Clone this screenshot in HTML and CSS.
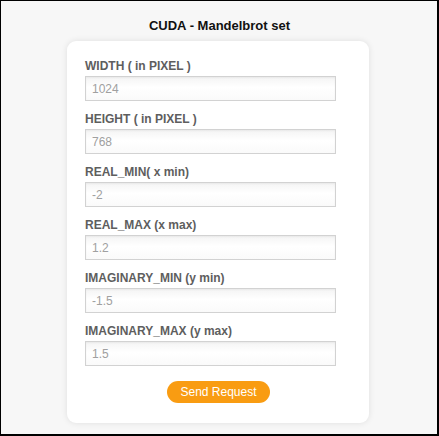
FILE: index.html
```html
<!DOCTYPE html>
<html>
<head>
<meta charset="utf-8">
<title>CUDA - Mandelbrot set</title>
<link rel="stylesheet" href="styles.css">
</head>
<body>
<div class="frame">
  <h1 class="title">CUDA - Mandelbrot set</h1>
  <form class="card">
    <label class="label">WIDTH ( in PIXEL )</label>
    <input class="field" type="text" placeholder="1024">
    <label class="label">HEIGHT ( in PIXEL )</label>
    <input class="field" type="text" placeholder="768">
    <label class="label">REAL_MIN( x min)</label>
    <input class="field" type="text" placeholder="-2">
    <label class="label">REAL_MAX (x max)</label>
    <input class="field" type="text" placeholder="1.2">
    <label class="label">IMAGINARY_MIN (y min)</label>
    <input class="field" type="text" placeholder="-1.5">
    <label class="label">IMAGINARY_MAX (y max)</label>
    <input class="field" type="text" placeholder="1.5">
    <div class="actions">
      <button class="send" type="button">Send Request</button>
    </div>
  </form>
</div>
</body>
</html>
```
FILE: styles.css
```css
* { box-sizing: border-box; }
html, body { margin: 0; padding: 0; }
body {
  font-family: "Liberation Sans", Arial, sans-serif;
  background: #ffffff;
}
.frame {
  width: 439px;
  height: 436px;
  background: #f7f7f7;
  border-style: solid;
  border-color: #000;
  border-width: 1px 2px 2px 1px;
  display: flex;
  flex-direction: column;
  align-items: center;
  overflow: hidden;
}
.title {
  margin: 17px 0 0 0;
  font-size: 13px;
  line-height: 15px;
  font-weight: bold;
  color: #111;
  text-align: center;
  width: 100%;
  padding-left: 1px;
}
.card {
  margin: 8px 0 0 -2px;
  width: 302px;
  background: #fff;
  border-radius: 9px;
  box-shadow: 0 0 6px rgba(0, 0, 0, 0.10);
  padding: 18px 18px 20px 18px;
  display: flex;
  flex-direction: column;
  align-items: flex-start;
}
.label {
  font-size: 12px;
  line-height: 14px;
  font-weight: bold;
  color: #5e5e5e;
  margin: 0 0 3px 0;
  display: block;
}
.field {
  width: 251px;
  height: 25px;
  margin: 0 0 11px 0;
  padding: 0 6px;
  border: 1px solid #d2d2d2;
  border-radius: 0;
  background: linear-gradient(#f4f4f4, #ffffff 45%, #fafafa);
  box-shadow: inset 0 1px 2px rgba(0, 0, 0, 0.05);
  font-family: "Liberation Sans", Arial, sans-serif;
  font-size: 12px;
  color: #999;
  outline: none;
}
.field::placeholder { color: #a0a0a0; }
.actions {
  width: 100%;
  display: flex;
  justify-content: center;
  margin-top: 4px;
}
.send {
  width: 103px;
  height: 22px;
  border: none;
  border-radius: 11px;
  background: #f99c12;
  color: #fff;
  font-family: "Liberation Sans", Arial, sans-serif;
  font-size: 12px;
  padding: 0;
  margin-left: 1px;
  cursor: pointer;
}
```
